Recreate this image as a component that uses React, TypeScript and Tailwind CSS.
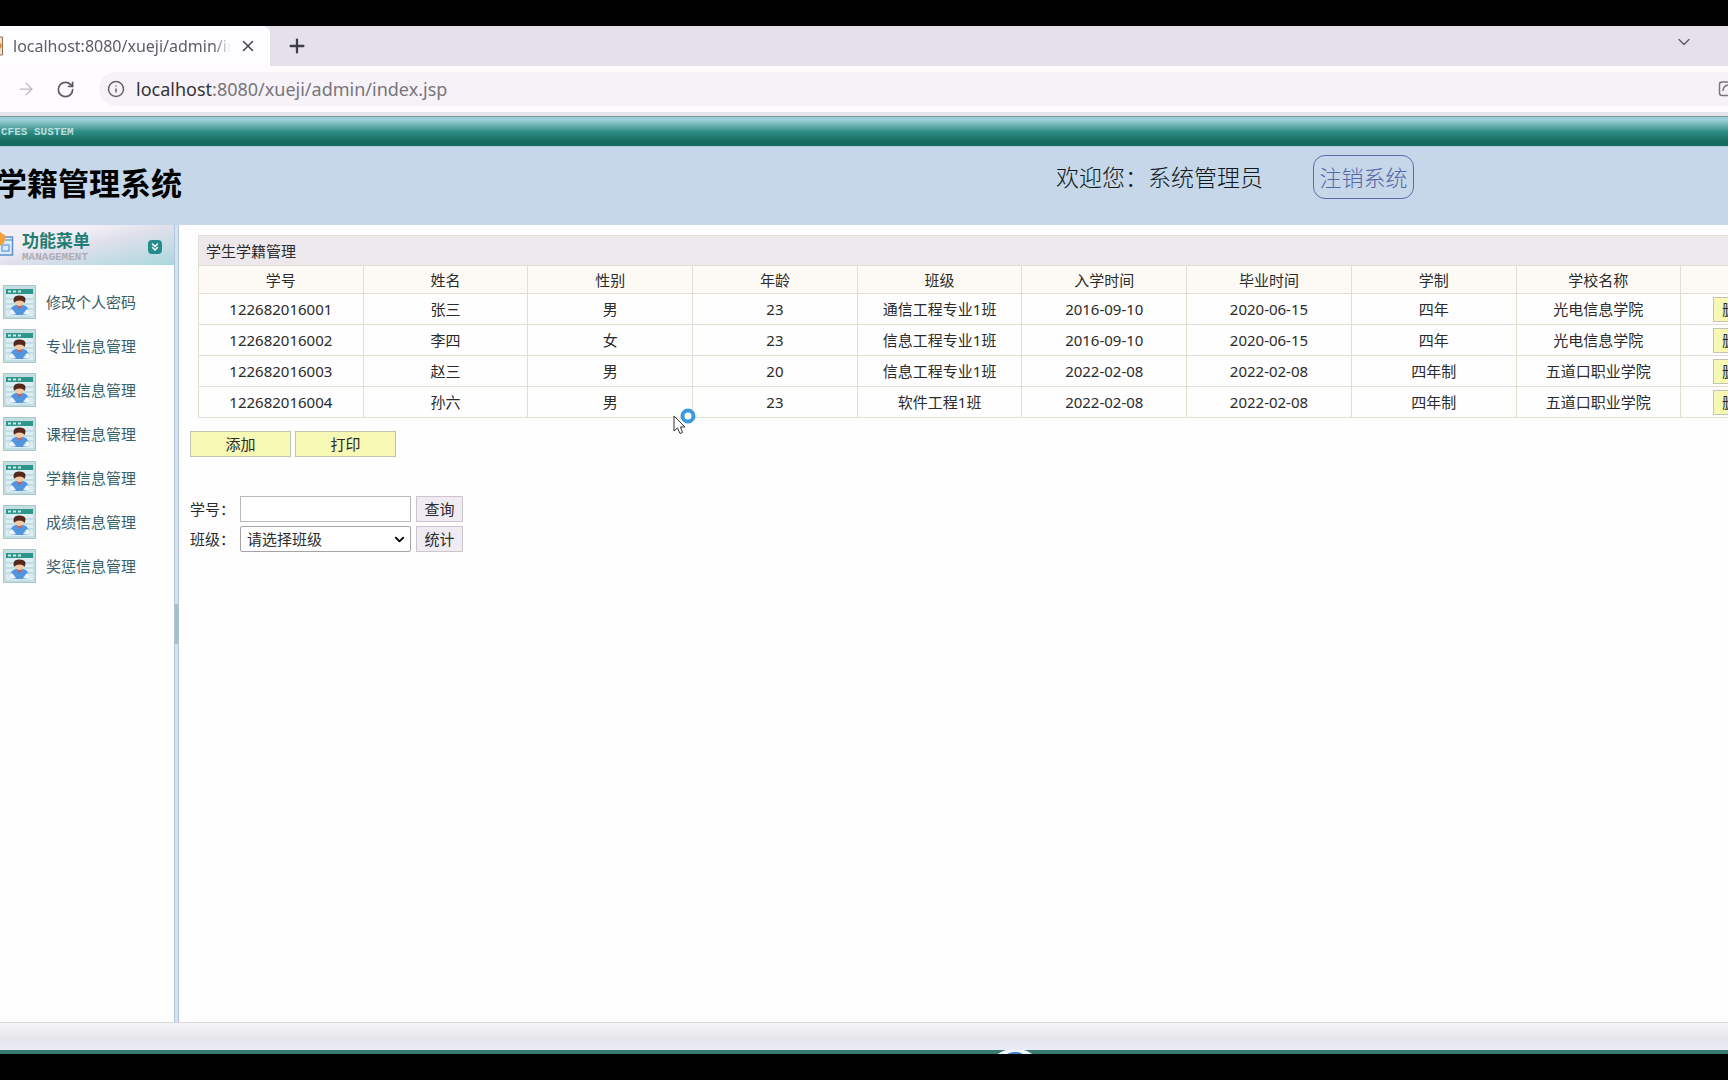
import { useState } from 'react';
import { ArrowRight, ChevronDown, ChevronsDown, Info, Plus, RotateCw, X } from 'lucide-react';

interface Student {
  id: string;
  name: string;
  sex: string;
  age: number;
  className: string;
  enrolled: string;
  graduated: string;
  system: string;
  school: string;
}

const students: Student[] = [
  { id: '122682016001', name: '张三', sex: '男', age: 23, className: '通信工程专业1班', enrolled: '2016-09-10', graduated: '2020-06-15', system: '四年', school: '光电信息学院' },
  { id: '122682016002', name: '李四', sex: '女', age: 23, className: '信息工程专业1班', enrolled: '2016-09-10', graduated: '2020-06-15', system: '四年', school: '光电信息学院' },
  { id: '122682016003', name: '赵三', sex: '男', age: 20, className: '信息工程专业1班', enrolled: '2022-02-08', graduated: '2022-02-08', system: '四年制', school: '五道口职业学院' },
  { id: '122682016004', name: '孙六', sex: '男', age: 23, className: '软件工程1班', enrolled: '2022-02-08', graduated: '2022-02-08', system: '四年制', school: '五道口职业学院' },
];

const columns = ['学号', '姓名', '性别', '年龄', '班级', '入学时间', '毕业时间', '学制', '学校名称', '操作'];

const menuItems = ['修改个人密码', '专业信息管理', '班级信息管理', '课程信息管理', '学籍信息管理', '成绩信息管理', '奖惩信息管理'];

export default function App() {
  return (
    <div className="h-screen flex flex-col overflow-hidden bg-black py-[26px] text-[15px] leading-5 text-[#2b2b2b] font-['Noto_Sans','Noto_Sans_CJK_SC',sans-serif]">
      <BrowserBar />
      <div className="h-[30px] shrink-0 flex items-center border-t border-[#7d9298] bg-linear-to-b from-[#9dd0da] from-10% via-[#2f8f88] via-50% to-[#146c60] to-85% px-px">
        <span className="text-[11px] leading-3 font-bold text-[#b9dfdc] font-['Liberation_Mono',monospace]">CFES SUSTEM</span>
      </div>
      <header className="h-[79px] shrink-0 flex items-start bg-[#c5d7e8] border-t border-[#b4d0de]">
        <h1 className="-ml-1 w-[1060px] shrink-0 pt-4 text-[31px] leading-10 font-bold text-black">学籍管理系统</h1>
        <p className="pt-[14px] w-[257px] shrink-0 text-[23px] leading-8 font-light text-[#101820]">欢迎您：系统管理员</p>
        <button className="mt-2 h-11 w-[101px] shrink-0 rounded-xl border border-[#5a6ca8] text-[22px] leading-8 font-light text-[#5568a8]">注销系统</button>
      </header>
      <div className="flex-1 min-h-0 flex bg-[#fefefe]">
        <Sidebar />
        <div className="w-[5px] shrink-0 flex items-center bg-[#d5e2f2] border-x border-[#b3c5da]">
          <span className="h-10 w-full bg-[#a0bfca]"></span>
        </div>
        <StudentPage />
      </div>
      <footer className="shrink-0">
        <div className="h-7 border-t border-[#d8d8dc] bg-linear-to-b from-[#f5f3f8] via-[#e6e6eb] via-60% to-[#eaedf8]"></div>
        <div className="h-1 bg-[#3a7a70] flex justify-center overflow-hidden">
          <svg className="ml-[302px] w-9 h-1" viewBox="0 0 36 4">
            <ellipse cx="18" cy="8" rx="19" ry="9" fill="#f4f8fc" />
            <ellipse cx="18" cy="6" rx="9" ry="4" fill="#3f7fc4" />
          </svg>
        </div>
      </footer>
    </div>
  );
}

function BrowserBar() {
  return (
    <div className="shrink-0">
      <div className="h-10 flex bg-[#e5e1eb]">
        <div className="w-[270px] flex items-center rounded-tr-lg bg-[#fefdff]">
          <svg className="w-[3px] h-5 shrink-0" viewBox="0 0 3 20">
            <path d="M0 1H2.500V19H0" fill="#f3e4cf" stroke="#8d6f58" strokeWidth="1" />
            <path d="M0 6L2 10L0 13Z" fill="#d98b3a" />
          </svg>
          <span className="ml-[10px] w-[218px] overflow-hidden whitespace-nowrap text-base leading-6 text-[#5f5d63] mask-r-from-92%">localhost:8080/xueji/admin/index.jsp</span>
          <button aria-label="关闭标签页" className="ml-2 text-[#444248]"><X size={18} strokeWidth={2} /></button>
        </div>
        <button aria-label="新标签页" className="ml-4 text-[#3f3d45]"><Plus size={22} strokeWidth={2.5} /></button>
        <button aria-label="搜索标签页" className="ml-auto mr-[34px] pb-2 text-[#5b5862]"><ChevronDown size={20} strokeWidth={1.5} /></button>
      </div>
      <div className="h-[46px] flex items-center bg-[#fefcff]">
        <button aria-label="前进" className="ml-4 text-[#bab8bd]"><ArrowRight size={20} strokeWidth={1.5} /></button>
        <button aria-label="刷新" className="ml-5 text-[#5e5c62]"><RotateCw size={19} strokeWidth={2.2} /></button>
        <div className="ml-6 flex-1 h-[34px] flex items-center overflow-hidden rounded-l-full bg-[#f6f2f7]">
          <Info size={18} strokeWidth={2} className="ml-2 shrink-0 text-[#66646a]" />
          <span className="ml-[11px] text-lg leading-6 text-[#77757b]"><span className="text-[#343238]">localhost</span>:8080/xueji/admin/index.jsp</span>
          <svg className="ml-auto w-[10px] h-5 shrink-0" viewBox="0 0 10 20" fill="none" stroke="#77757b" strokeWidth="1.500">
            <path d="M10 3H4Q1.500 3 1.500 5.500V14Q1.500 16.500 4 16.500H10M5 12Q5 7 10 6" />
          </svg>
        </div>
      </div>
      <div className="h-1 bg-[#e3e4ec]"></div>
    </div>
  );
}

function Sidebar() {
  return (
    <aside className="w-[174px] shrink-0">
      <div className="h-10 flex items-center bg-linear-to-br from-[#f3eff6] from-30% via-[#e0e0ec] via-50% to-[#a9d8dd]">
        <svg className="w-[14px] h-7 shrink-0" viewBox="0 0 14 28">
          <path d="M0 6H12.500V24H0" fill="#dcecfb" stroke="#5d8fce" strokeWidth="1.500" />
          <path d="M0 9H12M2 14H9V20H2Z" fill="none" stroke="#79a7dd" strokeWidth="1.500" />
          <path d="M0 1L6 5L4 12L0 15Z" fill="#f2a23c" />
        </svg>
        <div className="ml-2 pt-1">
          <h2 className="text-[17px] leading-5 font-bold text-[#1f7d73]">功能菜单</h2>
          <p className="text-[11px] leading-3 font-bold text-[#b0acb6] font-['Liberation_Mono',monospace]">MANAGEMENT</p>
        </div>
        <button aria-label="收起菜单" className="mt-1 ml-auto mr-3 size-[14px] flex items-center justify-center rounded-sm bg-[#258c8c] text-white"><ChevronsDown size={12} strokeWidth={3} /></button>
      </div>
      <nav className="mt-[15px]">
        {menuItems.map(item => (
          <a key={item} href="#" className="h-11 flex items-center gap-[10px] pl-[3px] text-[#35606a]">
            <UserIcon />
            {item}
          </a>
        ))}
      </nav>
    </aside>
  );
}

function UserIcon() {
  return (
    <svg className="w-[33px] h-[34px] shrink-0" viewBox="0 0 33 34">
      <rect x="0.500" y="0.500" width="32" height="33" fill="#c3dde3" stroke="#a9c6ce" />
      <rect x="3" y="4" width="27" height="27" fill="#dceef1" />
      <path d="M3 14H30M3 19H30M3 24H30" stroke="#abced5" />
      <rect x="3" y="4" width="27" height="5" fill="#2f968e" />
      <path d="M5 6.500H8M10 6.500H13M15 6.500H18" stroke="#c8ebe6" strokeWidth="2" />
      <path d="M8 30Q6 21 13 20H20Q27 21 25 30Z" fill="#4f95e0" />
      <path d="M5 27L9 24L13 29L8 30ZM28 27L24 24L20 29L25 30Z" fill="#eef6fc" stroke="#a9c9e6" strokeWidth="0.500" />
      <path d="M14 20L16.500 25L19 20Z" fill="#d9574b" />
      <ellipse cx="16.500" cy="17" rx="4.500" ry="4" fill="#f3c9a2" />
      <path d="M11 18Q9 11 15 10.500Q22 10 22.500 14Q22.500 16 21.500 18Q20.500 15.500 16.500 15.500Q12.500 15.500 11 18Z" fill="#54271b" />
    </svg>
  );
}

function StudentPage() {
  const [keyword, setKeyword] = useState('');

  return (
    <main className="relative flex-1 min-w-0 overflow-hidden pt-[10px] pl-[11px]">
      <table className="ml-2 w-[1648px] table-fixed border-collapse text-center">
        <thead>
          <tr className="h-[30px] bg-[#ede8ec]">
            <th colSpan={10} className="border border-[#e2dfd2] px-[7px] text-left font-normal">学生学籍管理</th>
          </tr>
          <tr className="h-7 bg-[#fdfaf6]">
            {columns.map(c => <th key={c} className="border border-[#e2dfd2] font-normal">{c}</th>)}
          </tr>
        </thead>
        <tbody>
          {students.map(s => (
            <tr key={s.id} className="h-[31px]">
              <td className="border border-[#e2dfd2]">{s.id}</td>
              <td className="border border-[#e2dfd2]">{s.name}</td>
              <td className="border border-[#e2dfd2]">{s.sex}</td>
              <td className="border border-[#e2dfd2]">{s.age}</td>
              <td className="border border-[#e2dfd2]">{s.className}</td>
              <td className="border border-[#e2dfd2]">{s.enrolled}</td>
              <td className="border border-[#e2dfd2]">{s.graduated}</td>
              <td className="border border-[#e2dfd2]">{s.system}</td>
              <td className="border border-[#e2dfd2]">{s.school}</td>
              <td className="border border-[#e2dfd2]">
                <div className="flex justify-center gap-1">
                  <button className="h-[25px] w-12 border border-[#c5c3b4] bg-[#f6f8b4]">删除</button>
                  <button className="h-[25px] w-12 border border-[#c5c3b4] bg-[#f6f8b4]">修改</button>
                </div>
              </td>
            </tr>
          ))}
        </tbody>
      </table>

      <div className="mt-[13px] flex gap-1">
        <button className="h-[26px] w-[101px] border border-[#c5c3b4] bg-[#f6f8b4]">添加</button>
        <button className="h-[26px] w-[101px] border border-[#c5c3b4] bg-[#f6f8b4]">打印</button>
      </div>

      <form className="mt-[39px] space-y-1" onSubmit={e => e.preventDefault()}>
        <div className="flex items-center">
          <label htmlFor="stuNo" className="w-[50px]">学号：</label>
          <input id="stuNo" value={keyword} onChange={e => setKeyword(e.target.value)} className="h-[26px] w-[171px] border border-[#b9b6bc] bg-white px-1" />
          <button className="ml-[5px] h-[26px] w-[47px] border border-[#cbc6cd] bg-[#f0eaf1]">查询</button>
        </div>
        <div className="flex items-center">
          <label htmlFor="stuClass" className="w-[50px]">班级：</label>
          <div className="relative">
            <select id="stuClass" className="h-[26px] w-[171px] appearance-none rounded-xs border border-[#a5a3a8] bg-white px-[6px]">
              <option>请选择班级</option>
            </select>
            <ChevronDown size={15} strokeWidth={3} className="absolute right-1 top-[6px] pointer-events-none text-black" />
          </div>
          <button className="ml-[5px] h-[26px] w-[47px] border border-[#cbc6cd] bg-[#f0eaf1]">统计</button>
        </div>
      </form>

      {/* mouse pointer, busy */}
      <svg className="absolute left-[494px] top-[182px] w-6 h-7 pointer-events-none" viewBox="0 0 24 28">
        <path d="M1 9V24L4.500 21L7 26.500L9.500 25.500L7.500 20H12Z" fill="#fff" stroke="#333" />
        <circle cx="15" cy="9" r="5.500" fill="#fff" stroke="#3c9be0" strokeWidth="4" />
      </svg>
    </main>
  );
}
